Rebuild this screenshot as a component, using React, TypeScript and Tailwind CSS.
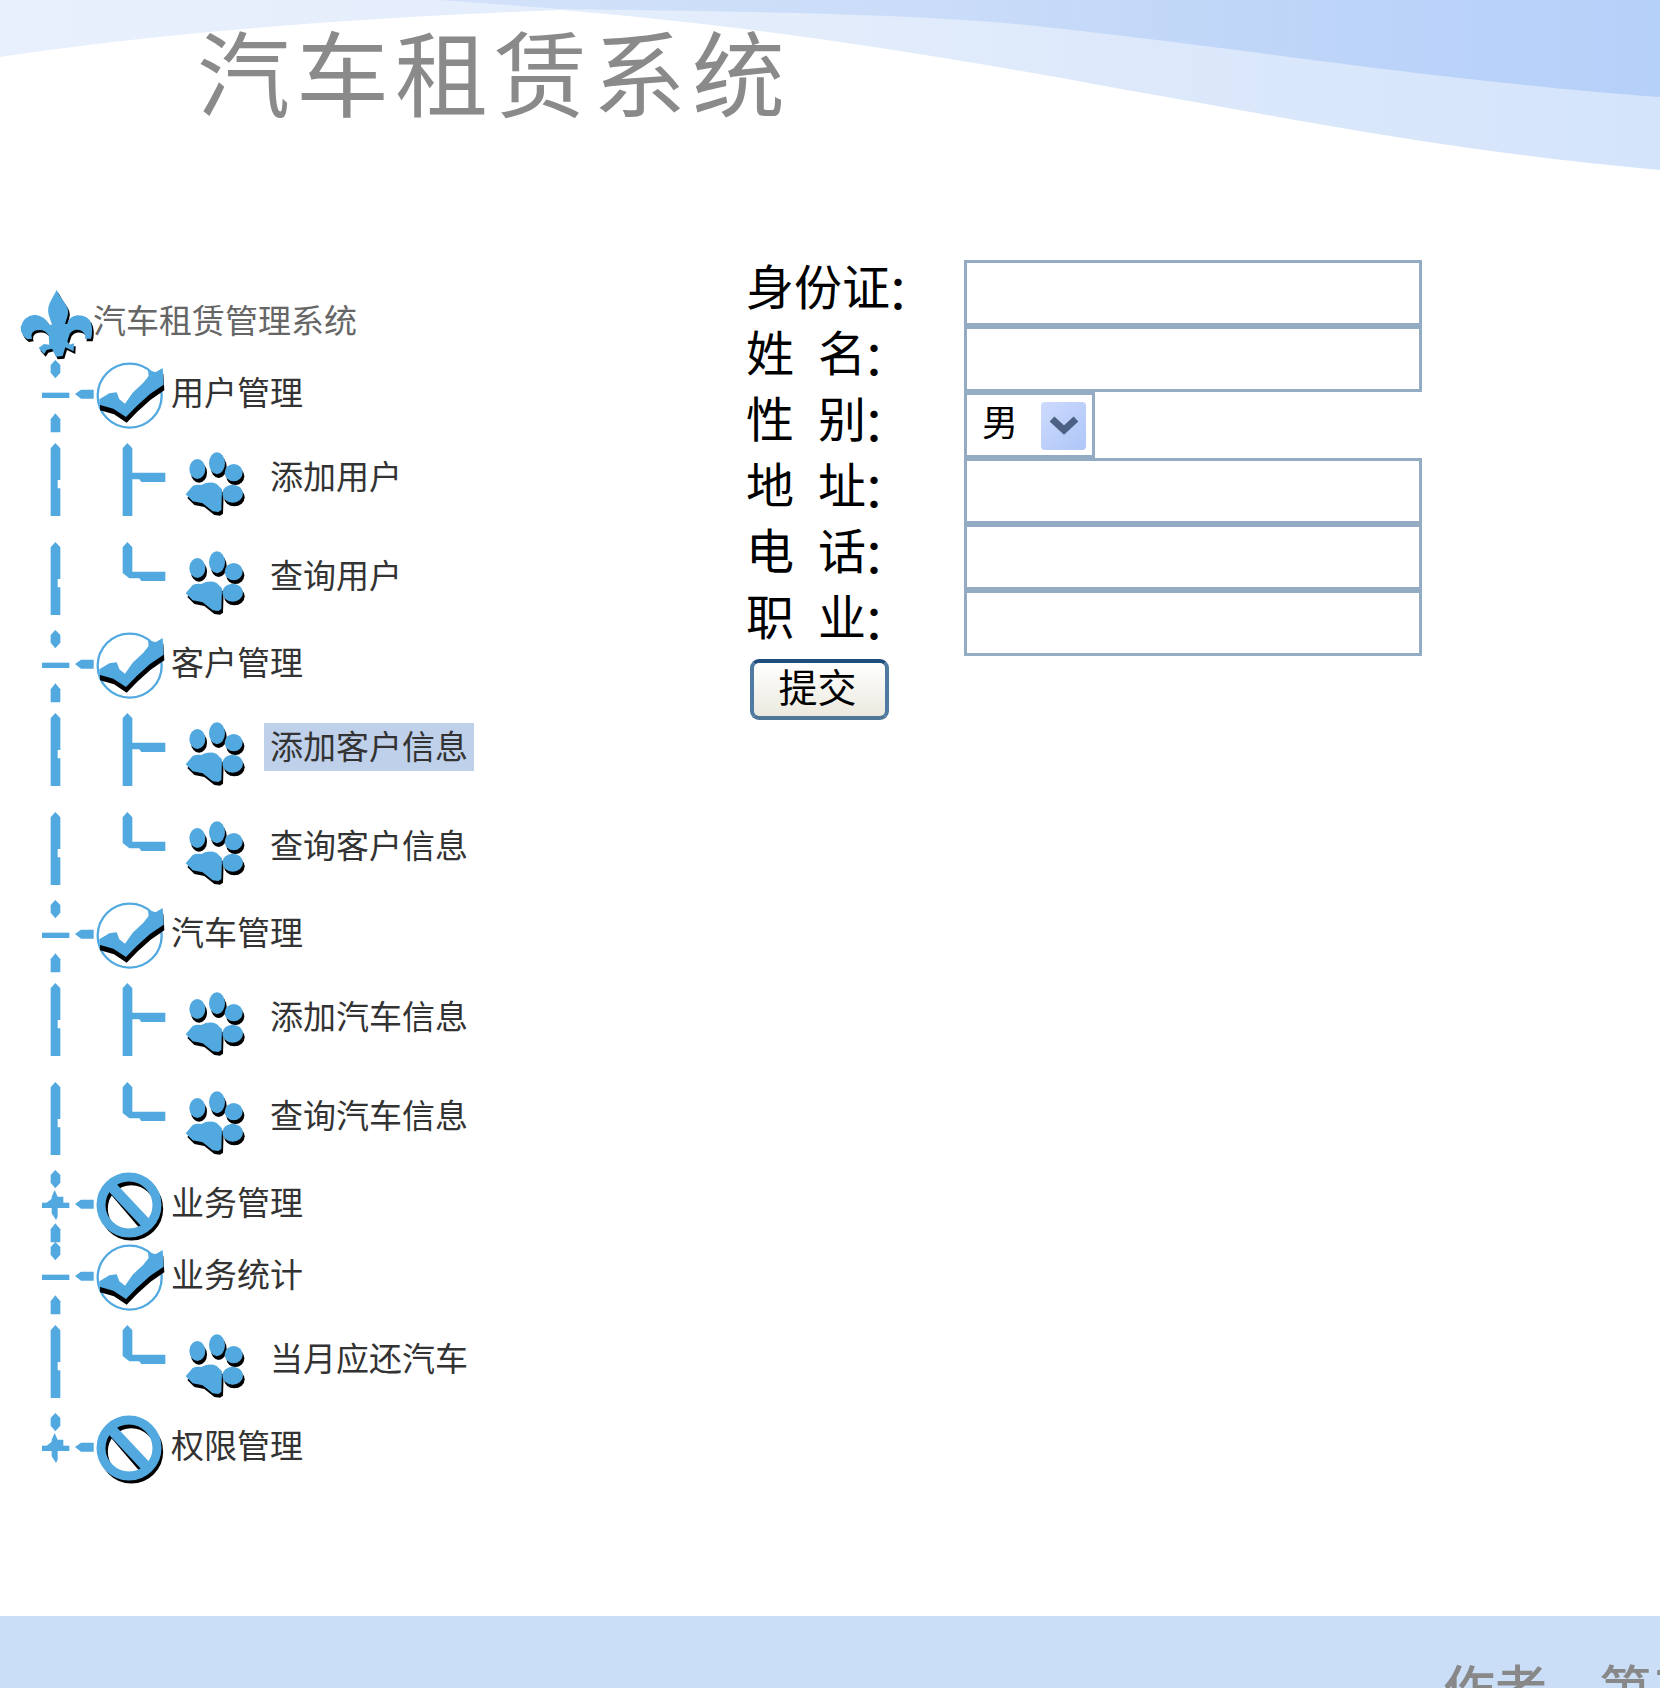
import React from 'react';

const BLUE = '#52a9e0';

function Shadowed({ dx, dy, children }: { dx: number; dy: number; children: React.ReactNode }) {
  return (
    <g>
      <g transform={`translate(${dx} ${dy})`} fill="#000">{children}</g>
      <g fill={BLUE}>{children}</g>
    </g>
  );
}

function RootIcon() {
  return (
    <svg className="h-[72px] w-[93px] shrink-0 overflow-visible" viewBox="0 51 279 216">
      <Shadowed dx={5} dy={8}>
        <path d="M170 60 L181 80 L198 105 Q208 122 202 140 L195 162 L202 162 Q206 140 232 136 Q268 136 274 162 Q279 185 273 206 L254 206 Q260 192 244 182 Q222 174 209 192 L202 214 L208 224 L222 220 L221 244 L213 240 L196 232 L188 258 L168 260 L156 236 L140 240 L132 252 L116 234 L132 222 L148 224 L146 196 Q132 174 104 182 Q90 190 96 206 L82 208 Q62 195 62 172 Q70 138 104 134 Q134 137 148 164 L156 164 L146 134 Q140 112 155 88 Z" />
      </Shadowed>
    </svg>
  );
}

function NodeIcon({ open, last }: { open: boolean; last: boolean }) {
  return (
    <svg className="h-[72px] w-[171px] shrink-0 overflow-visible" viewBox="0 267 513 216">
      <g fill={BLUE}>
        <path d="M166 270 L181 285 V308 L166 325 L152 308 V285Z" />
        <rect x="126" y="368" width="82" height="16" />
        <path d="M225 372 L243 359 H281 V386 H243Z" />
        {!open && <path d="M155 350 L164 330 L173 350 H190 V384 H173 V410 L168 420 L155 400 V384 H140 V368 L155 356Z" />}
        {!last && <path d="M166 430 L181 448 V487 H152 V448Z" />}
      </g>
      {open ? (
        <g>
          <circle cx="389" cy="377" r="96" fill="#fff" stroke={BLUE} strokeWidth="7" />
          <Shadowed dx={2} dy={17}>
            <path d="M298 388 L328 370 L350 367 L358 388 L375 401 L398 368 L430 338 L446 318 L444 302 L468 306 L488 294 L491 344 L450 372 L410 408 L378 441 L340 416 L298 404Z" />
          </Shadowed>
        </g>
      ) : (
        <g fill="none">
          <g transform="translate(7 11)" stroke="#000" strokeWidth="25">
            <circle cx="387" cy="375" r="83" />
            <path d="M333 322 L420 424" />
          </g>
          <g stroke={BLUE} strokeWidth="27">
            <circle cx="387" cy="375" r="84" />
            <path d="M330 315 L440 432" strokeWidth="32" />
          </g>
        </g>
      )}
    </svg>
  );
}

function LeafIcon({ last }: { last: boolean }) {
  return (
    <svg className="h-[99px] w-[264px] shrink-0 overflow-visible" viewBox="0 483 792 297">
      <g fill={BLUE}>
        <path d="M166 519 L181 535 V630 H173 V655 H181 V738 H152 V535Z" />
        {last ? (
          <path d="M382 519 L397 535 V608 H496 V636 H424 L418 628 H388 L368 612 V535Z" />
        ) : (
          <path d="M382 519 L397 535 V608 H496 V636 H424 L418 628 H397 V738 H368 V535Z" />
        )}
      </g>
      <Shadowed dx={5} dy={11}>
        <ellipse cx="592" cy="597" rx="24" ry="30" />
        <ellipse cx="651" cy="580" rx="24" ry="33" />
        <ellipse cx="701" cy="608" rx="27" ry="26" />
        <ellipse cx="698" cy="671" rx="31" ry="27" />
        <path d="M557 673 L578 648 Q590 642 604 645 Q628 632 650 642 L666 658 L664 720 L655 726 L638 724 L608 700 L578 694Z" />
      </Shadowed>
    </svg>
  );
}

type Group = { name: string; open: boolean; items: string[] };

const groups: Group[] = [
  { name: '用户管理', open: true, items: ['添加用户', '查询用户'] },
  { name: '客户管理', open: true, items: ['添加客户信息', '查询客户信息'] },
  { name: '汽车管理', open: true, items: ['添加汽车信息', '查询汽车信息'] },
  { name: '业务管理', open: false, items: [] },
  { name: '业务统计', open: true, items: ['当月应还汽车'] },
  { name: '权限管理', open: false, items: [] },
];

const selected = '添加客户信息';

function Tree() {
  return (
    <nav className="w-[746px] shrink-0 pt-[87px] text-[33px] leading-[48px] text-[#333]">
      <div className="flex h-[72px]">
        <RootIcon />
        <span className="pt-[8px] text-[#666]">汽车租赁管理系统</span>
      </div>
      {groups.map((g, gi) => (
        <div key={g.name}>
          <div className="flex h-[72px]">
            <NodeIcon open={g.open} last={gi === groups.length - 1} />
            <span className="pt-[8px]">{g.name}</span>
          </div>
          {g.items.map((item, i) => (
            <div key={item} className="flex h-[99px]">
              <LeafIcon last={i === g.items.length - 1} />
              <span
                className={
                  item === selected
                    ? 'mt-[22px] h-[48px] bg-[#bfd0ea] px-[6px] leading-[45px]'
                    : 'mt-[22px] h-[48px] px-[6px] leading-[45px]'
                }
              >
                {item}
              </span>
            </div>
          ))}
        </div>
      ))}
    </nav>
  );
}

const fields = ['身份证', '姓 名', '性 别', '地 址', '电 话', '职 业'];

function Form() {
  return (
    <form className="pt-[60px] text-black">
      {fields.map((f) => (
        <div key={f} className="flex h-[66px]">
          <label className="flex w-[218px] text-[48px] leading-[48px]">
            {f.includes(' ') ? (
              <span className="flex gap-[24px]">
                <span>{f[0]}</span>
                <span>{f[2]}</span>
              </span>
            ) : (
              <span>{f}</span>
            )}
            <span className="-ml-[4px] pt-[4px]">：</span>
          </label>
          {f === '性 别' ? (
            <div className="flex h-[66px] w-[131px] justify-between border-[3px] border-[#93abc3] bg-white pt-[7px] pr-[6px] pl-[15px]">
              <span className="text-[36px] leading-[37px]">男</span>
              <span className="flex h-[48px] w-[45px] items-center justify-center rounded-[4px] bg-gradient-to-br from-[#cddafd] to-[#aec6f8]">
                <svg className="h-[20px] w-[30px]" viewBox="0 0 30 20">
                  <path d="M3 3 L15 14 L27 3" fill="none" stroke="#4d6185" strokeWidth="7" />
                </svg>
              </span>
            </div>
          ) : (
            <input className="h-[66px] w-[458px] border-[3px] border-[#93abc3] bg-white" />
          )}
        </div>
      ))}
      <button
        type="button"
        className="mt-[3px] ml-[4px] flex h-[61px] w-[139px] justify-center rounded-[9px] border-[4px] border-t-[#1f4d7c] border-r-[#4f7ba3] border-b-[#4f7597] border-l-[#4f7ba3] bg-gradient-to-b from-white to-[#ebe9df] pr-[4px] text-[39px] leading-[44px]"
      >
        提交
      </button>
    </form>
  );
}

function Header() {
  return (
    <header className="grid h-[200px]">
      <svg className="col-start-1 row-start-1 h-[200px] w-[1660px]" viewBox="0 0 1660 200">
        <defs>
          <linearGradient id="light" x1="0" x2="1">
            <stop offset="0" stopColor="#e9f0fd" />
            <stop offset="0.5" stopColor="#e2ecfb" />
            <stop offset="1" stopColor="#d4e4fb" />
          </linearGradient>
          <linearGradient id="deep" x1="0" x2="1">
            <stop offset="0" stopColor="#d3e2fa" />
            <stop offset="0.45" stopColor="#c8dbf8" />
            <stop offset="0.8" stopColor="#bbd3f9" />
            <stop offset="1" stopColor="#b5d0f9" />
          </linearGradient>
        </defs>
        <path d="M0 0H1660V170C1440 150 1300 120 1121 89C900 48 740 25 561 10C380 17 180 30 0 57Z" fill="url(#light)" />
        <path d="M440 0H1660V97C1390 76 1250 48 1015 24C900 13 700 11 560 9Z" fill="url(#deep)" />
      </svg>
      <h1 className="col-start-1 row-start-1 pt-[20px] pl-[197px] text-[93px] leading-[100px] font-normal tracking-[6px] text-[#8a8a8a]">
        汽车租赁系统
      </h1>
    </header>
  );
}

export default function App() {
  return (
    <div className="flex h-[1692px] w-[1660px] flex-col overflow-hidden bg-white font-['Noto_Sans_CJK_SC',sans-serif]">
      <Header />
      <main className="flex grow">
        <Tree />
        <Form />
      </main>
      <footer className="mb-[4px] h-[72px] shrink-0 overflow-hidden bg-[#cadef8] pt-[41px] pl-[1443px] text-[52px] leading-[60px] font-medium whitespace-nowrap text-[#888]">
        作者　第三组
      </footer>
    </div>
  );
}
